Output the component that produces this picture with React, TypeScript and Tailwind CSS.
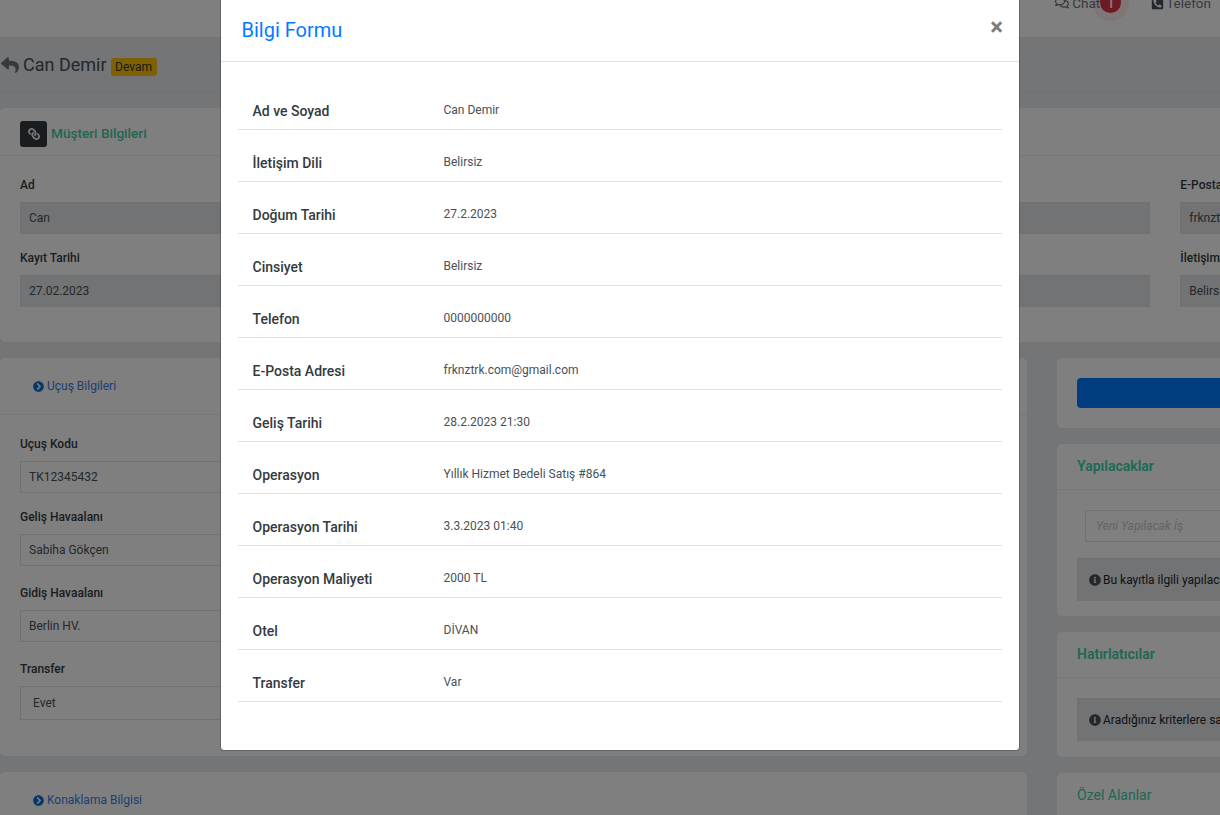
import { FaChevronCircleRight, FaInfoCircle, FaLink, FaPhoneSquareAlt, FaRegComments, FaReply } from 'react-icons/fa';

const formRows = [
  ['Ad ve Soyad', 'Can Demir'],
  ['İletişim Dili', 'Belirsiz'],
  ['Doğum Tarihi', '27.2.2023'],
  ['Cinsiyet', 'Belirsiz'],
  ['Telefon', '0000000000'],
  ['E-Posta Adresi', 'frknztrk.com@gmail.com'],
  ['Geliş Tarihi', '28.2.2023 21:30'],
  ['Operasyon', 'Yıllık Hizmet Bedeli Satış #864'],
  ['Operasyon Tarihi', '3.3.2023 01:40'],
  ['Operasyon Maliyeti', '2000 TL'],
  ['Otel', 'DİVAN'],
  ['Transfer', 'Var'],
];

function ReadonlyField({ label, value }: { label?: string; value?: string }) {
  return (
    <div>
      <div className="h-[19px] text-[12px] leading-[19px] font-medium text-[#343a40]">{label}</div>
      <div className="mt-[7px] h-[32px] truncate border border-[#dee2e6] bg-[#e3e6e9] pl-[8px] text-[12px] leading-[30px] text-[#495057]">
        {value}
      </div>
    </div>
  );
}

function InputField({ label, value, className = '', pad = 'pl-[8px]', height = 'h-[32px]' }: { label: string; value: string; className?: string; pad?: string; height?: string }) {
  return (
    <div className={className}>
      <div className="h-[19px] text-[12px] leading-[17px] font-medium text-[#343a40]">{label}</div>
      <div className={`mt-[6px] ${height} border border-[#dee2e6] bg-white ${pad} flex items-center text-[12px] text-[#495057]`}>
        {value}
      </div>
    </div>
  );
}

function SideCard({ title, children, light }: { title: string; children: React.ReactNode; light?: boolean }) {
  return (
    <div className="rounded-[5px] bg-white">
      <div className={`flex h-[46px] items-center border-b border-[#eceff3] pl-[20px] text-[14px] text-[#3ccfa8] ${light ? 'font-normal' : 'font-semibold'}`}>
        {title}
      </div>
      {children}
    </div>
  );
}

function InfoAlert({ text }: { text: string }) {
  return (
    <div className="flex h-[43px] items-center gap-[2px] whitespace-nowrap border-t border-[#dde2e8] bg-[#e3e6e9] pl-[12px] text-[12px] text-[#212529]">
      <FaInfoCircle className="h-[12px] w-[12px] shrink-0 text-[#495057]" />
      {text}
    </div>
  );
}

export default function App() {
  return (
    <div className="relative h-[815px] w-[1220px] overflow-hidden bg-[#e8eaed] font-['Roboto',sans-serif]">
      {/* Page under the backdrop */}
      <div className="flex h-[38px] items-start justify-end gap-[51px] border-b border-[#dee2e6] bg-white pr-[9px] text-[13.5px] text-[#6c757d]">
        <div className="relative -mt-[6px] flex items-center gap-[3px] leading-[18px]">
          <FaRegComments className="h-[14px] w-[14px]" />
          Chat
          <span className="absolute -top-[9px] left-[38px] h-[36px] w-[36px] rounded-full bg-[#dc3545]/10" />
          <span className="absolute -top-[2px] left-[45px] flex h-[21px] w-[21px] items-center justify-center rounded-full bg-[#dc3545] text-[14px] font-medium text-white">
            1
          </span>
        </div>
        <div className="-mt-[6px] flex items-center gap-[2px] leading-[18px]">
          <FaPhoneSquareAlt className="h-[13px] w-[13px] text-[#495057]" />
          Telefon
        </div>
      </div>

      <div className="flex h-[54px] items-center gap-[4px] border-b border-[#dee2e6] bg-[#e8eaed] pl-[1px]">
        <FaReply className="h-[18px] w-[18px] text-[#6c757d]" />
        <span className="text-[18px] text-[#495057]">Can Demir</span>
        <span className="mt-[4px] w-[46px] rounded-[3px] bg-[#ffc107] text-center text-[12px] leading-[18px] text-[#343a40]">Devam</span>
      </div>

      <div className="mt-[16px] h-[234px] w-[1240px] rounded-[5px] bg-white">
        <div className="flex h-[48px] items-center gap-[4px] border-b border-[#eceff3] pl-[20px] pt-[4px]">
          <span className="flex h-[26px] w-[27px] items-center justify-center rounded-[3px] bg-[#343a40]">
            <FaLink className="h-[12px] w-[12px] -scale-x-100 text-[#e9ecef]" />
          </span>
          <span className="text-[13.6px] font-medium text-[#3ccfa8]">Müşteri Bilgileri</span>
        </div>
        <div className="grid w-[1537px] grid-cols-4 gap-x-[30px] gap-y-[15px] pl-[20px] pt-[20px]">
          <ReadonlyField label="Ad" value="Can" />
          <ReadonlyField />
          <ReadonlyField />
          <ReadonlyField label="E-Posta Adresi" value="frknztrk.com@gmail.com" />
          <ReadonlyField label="Kayıt Tarihi" value="27.02.2023" />
          <ReadonlyField />
          <ReadonlyField />
          <ReadonlyField label="İletişim Dili" value="Belirsiz" />
        </div>
      </div>

      <div className="mt-[16px] flex gap-[30px]">
        <div className="flex w-[1027px] shrink-0 flex-col gap-[16px]">
          <div className="h-[398px] rounded-[5px] bg-white">
            <div className="flex h-[57px] items-center gap-[3px] border-b border-[#eceff3] pl-[33px] text-[12px] text-[#3b7ddd]">
              <FaChevronCircleRight className="h-[11px] w-[11px] text-[#0a6ed1]" />
              Uçuş Bilgileri
            </div>
            <div className="flex flex-col px-[20px] pt-[21px]">
              <InputField label="Uçuş Kodu" value="TK12345432" />
              <InputField className="mt-[16px]" label="Geliş Havaalanı" value="Sabiha Gökçen" />
              <InputField className="mt-[19px]" label="Gidiş Havaalanı" value="Berlin HV." />
              <InputField className="mt-[19px]" label="Transfer" value="Evet" pad="pl-[12px]" height="h-[34px]" />
            </div>
          </div>
          <div className="h-[60px] rounded-[5px] bg-white pl-[33px] pt-[19px]">
            <div className="flex items-center gap-[3px] text-[12px] text-[#3b7ddd]">
              <FaChevronCircleRight className="h-[11px] w-[11px] text-[#0a6ed1]" />
              Konaklama Bilgisi
            </div>
          </div>
        </div>

        <div className="flex w-[400px] shrink-0 flex-col gap-[16px]">
          <div className="h-[70px] rounded-[5px] bg-white pl-[20px] pt-[20px]">
            <div className="h-[30px] rounded-[4px] bg-[#007bff]" />
          </div>
          <SideCard title="Yapılacaklar">
            <div className="h-[126px] pl-[20px] pt-[20px]">
              <div className="ml-[8px] flex h-[32px] items-center border border-[#dee2e6] pl-[10px] text-[12px] italic text-[#c5c9ce]">
                Yeni Yapılacak İş
              </div>
              <div className="mt-[16px]">
                <InfoAlert text="Bu kayıtla ilgili yapılacak iş bulunamadı." />
              </div>
            </div>
          </SideCard>
          <SideCard title="Hatırlatıcılar">
            <div className="h-[79px] pl-[20px] pt-[20px]">
              <InfoAlert text="Aradığınız kriterlere sahip kayıt bulunamadı." />
            </div>
          </SideCard>
          <SideCard title="Özel Alanlar" light>
            <div className="h-[60px]" />
          </SideCard>
        </div>
      </div>

      {/* Backdrop and dialog */}
      <div className="absolute inset-0 bg-black/50" />
      <div className="absolute left-[220px] top-0 h-[751px] w-[800px] rounded-b-[4px] border border-t-0 border-black/20 bg-white bg-clip-padding">
        <div className="relative flex h-[62px] items-center border-b border-[#dee2e6] pb-[2px] pl-[20.5px] text-[20px] text-[#007bff]">
          Bilgi Formu
          <span className="absolute right-[16px] top-[9px] text-[24px] font-bold leading-[36px] text-[#7d7d7d]">×</span>
        </div>
        <div className="mx-[17px] mt-[16px]">
          {formRows.map(([label, value]) => (
            <div key={label} className="flex h-[52px] border-b border-[#dee2e6]">
              <div className="w-[205.5px] pl-[14.5px] pt-[23px] text-[14px] leading-[21px] font-medium text-[#343a40]">{label}</div>
              <div className="pt-[23px] text-[12px] leading-[18px] text-[#495057]">{value}</div>
            </div>
          ))}
        </div>
      </div>
    </div>
  );
}
